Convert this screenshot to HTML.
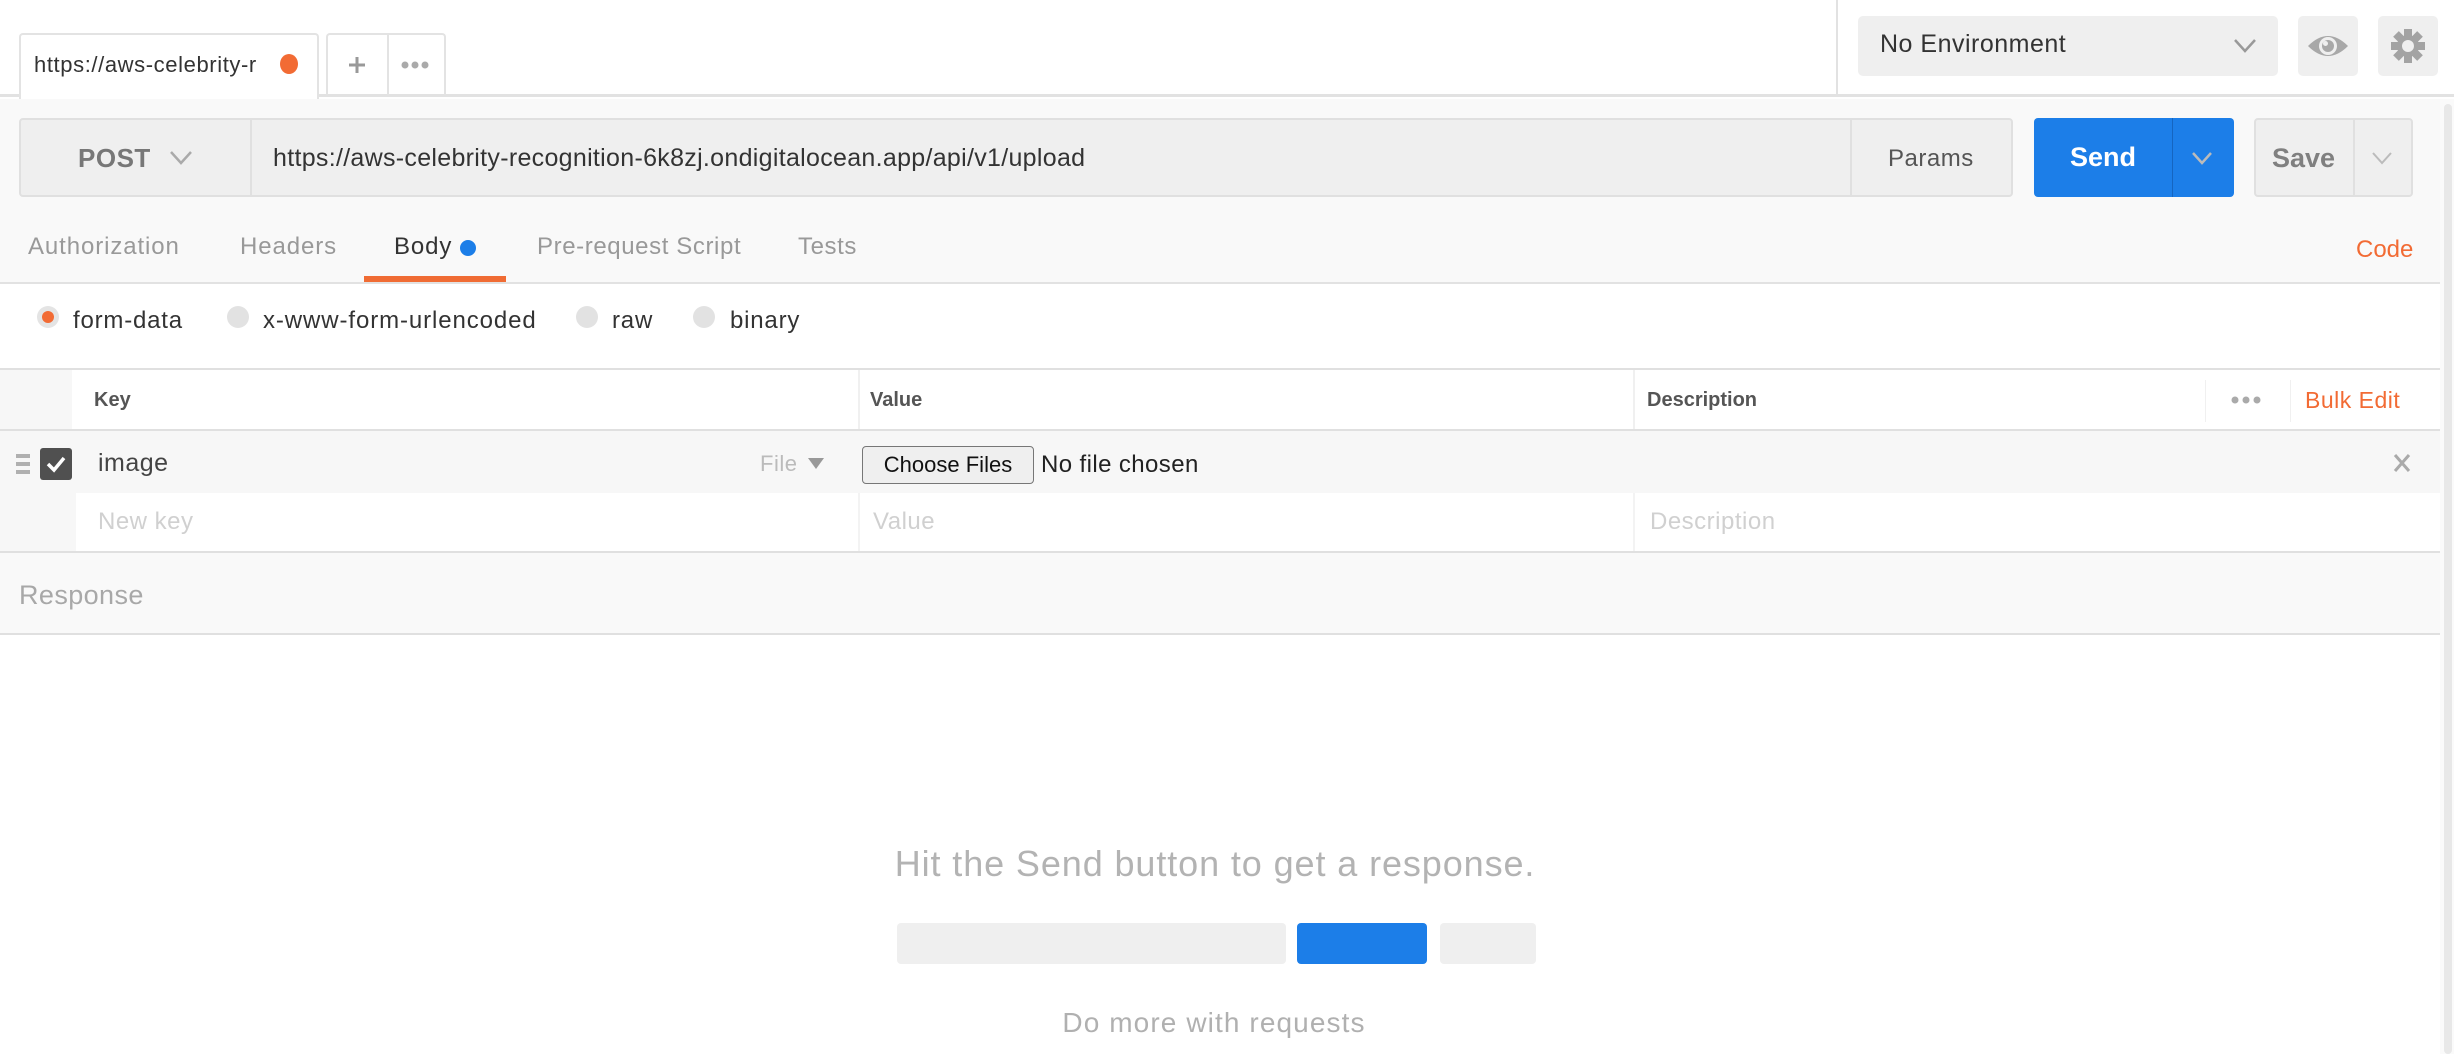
<!DOCTYPE html>
<html><head><meta charset="utf-8"><style>
*{box-sizing:border-box;margin:0;padding:0}
body{width:2454px;height:1054px;overflow:hidden;background:#fff;font-family:"Liberation Sans",sans-serif;position:relative;color:#505050}
.a{position:absolute;white-space:nowrap}
</style></head><body>
<!-- top bar -->
<div class="a" style="left:0;top:0;width:2454px;height:97px;background:#fff;border-bottom:3px solid #e2e2e2"></div>
<div class="a" style="left:19px;top:33px;width:300px;height:66px;background:#fff;border:2px solid #e3e3e3;border-bottom:none;border-radius:4px 4px 0 0"></div>
<div class="a" style="left:34px;top:52px;font-size:22px;color:#333;width:222px;overflow:hidden;letter-spacing:0.6px">https://aws-celebrity-recognition</div>
<div class="a" style="left:280px;top:54px;width:18px;height:20px;border-radius:50%;background:#f26b34"></div>
<div class="a" style="left:326px;top:33px;width:120px;height:62px;border:2px solid #e3e3e3;border-bottom:none;border-radius:4px 4px 0 0"></div>
<div class="a" style="left:387px;top:33px;width:2px;height:62px;background:#e3e3e3"></div>
<svg class="a" style="left:347px;top:55px" width="20" height="20"><path d="M10 2 V18 M2 10 H18" stroke="#999" stroke-width="3"/></svg>
<svg class="a" style="left:400px;top:60px" width="30" height="10"><circle cx="5" cy="5" r="3.5" fill="#aaa"/><circle cx="15" cy="5" r="3.5" fill="#aaa"/><circle cx="25" cy="5" r="3.5" fill="#aaa"/></svg>
<div class="a" style="left:1836px;top:0;width:2px;height:96px;background:#e2e2e2"></div>
<div class="a" style="left:1858px;top:16px;width:420px;height:60px;background:#efefef;border-radius:5px"></div>
<div class="a" style="left:1880px;top:30px;font-size:25px;color:#333;letter-spacing:0.5px">No Environment</div>
<svg class="a" style="left:2232px;top:36px" width="26" height="20"><path d="M3 4 L13 15 L23 4" stroke="#999" stroke-width="2.5" fill="none"/></svg>
<div class="a" style="left:2298px;top:16px;width:60px;height:60px;background:#efefef;border-radius:5px"></div>
<svg class="a" style="left:2306px;top:28px" width="44" height="36"><path d="M2 18 Q22 -2 42 18 Q22 38 2 18Z" fill="#a8a8a8"/><circle cx="22" cy="18" r="9" fill="#efefef"/><circle cx="22" cy="18" r="6" fill="#a8a8a8"/><circle cx="19.5" cy="15.5" r="2.5" fill="#efefef"/></svg>
<div class="a" style="left:2378px;top:16px;width:60px;height:60px;background:#efefef;border-radius:5px"></div>
<svg class="a" style="left:2390px;top:28px" width="36" height="36" viewBox="0 0 36 36"><g fill="#a3a3a3"><circle cx="18" cy="18" r="11"/><rect x="14" y="1" width="8" height="34"/><rect x="1" y="14" width="34" height="8"/><rect x="14" y="1" width="8" height="34" transform="rotate(45 18 18)"/><rect x="14" y="1" width="8" height="34" transform="rotate(-45 18 18)"/></g><circle cx="18" cy="18" r="6" fill="#efefef"/></svg>

<!-- request area -->
<div class="a" style="left:0;top:99px;width:2440px;height:183px;background:#f9f9f9"></div>
<div class="a" style="left:2440px;top:99px;width:14px;height:955px;background:#fafafa"></div>
<div class="a" style="left:2444px;top:104px;width:8px;height:950px;background:#e8e8e8;border-radius:4px"></div>
<div class="a" style="left:19px;top:118px;width:1994px;height:79px;background:#efefef;border:2px solid #e0e0e0;border-radius:4px"></div>
<div class="a" style="left:250px;top:118px;width:2px;height:79px;background:#e0e0e0"></div>
<div class="a" style="left:1850px;top:118px;width:2px;height:79px;background:#e0e0e0"></div>
<div class="a" style="left:78px;top:143px;font-size:26px;font-weight:bold;color:#777;letter-spacing:0.5px">POST</div>
<svg class="a" style="left:168px;top:148px" width="26" height="20"><path d="M3 4 L13 15 L23 4" stroke="#aaa" stroke-width="2.5" fill="none"/></svg>
<div class="a" style="left:273px;top:144px;font-size:25px;color:#333;letter-spacing:0.3px">https://aws-celebrity-recognition-6k8zj.ondigitalocean.app/api/v1/upload</div>
<div class="a" style="left:1888px;top:145px;font-size:24px;color:#555;letter-spacing:0.5px">Params</div>
<div class="a" style="left:2034px;top:118px;width:200px;height:79px;background:#1c7ee8;border-radius:4px"></div>
<div class="a" style="left:2172px;top:118px;width:1px;height:79px;background:#1565c0"></div>
<div class="a" style="left:2070px;top:142px;font-size:27px;font-weight:bold;color:#fff">Send</div>
<svg class="a" style="left:2190px;top:150px" width="24" height="18"><path d="M3 3 L12 13 L21 3" stroke="#bbb" stroke-width="2.5" fill="none"/></svg>
<div class="a" style="left:2254px;top:118px;width:159px;height:79px;background:#efefef;border:2px solid #e0e0e0;border-radius:4px"></div>
<div class="a" style="left:2353px;top:118px;width:2px;height:79px;background:#e0e0e0"></div>
<div class="a" style="left:2272px;top:143px;font-size:27px;font-weight:bold;color:#808080">Save</div>
<svg class="a" style="left:2370px;top:150px" width="24" height="18"><path d="M3 3 L12 13 L21 3" stroke="#bbb" stroke-width="2" fill="none"/></svg>

<!-- tabs -->
<div class="a" style="left:28px;top:233px;font-size:24px;color:#999;letter-spacing:0.9px">Authorization</div>
<div class="a" style="left:240px;top:233px;font-size:24px;color:#999;letter-spacing:0.9px">Headers</div>
<div class="a" style="left:394px;top:233px;font-size:24px;color:#333;letter-spacing:0.9px">Body</div>
<div class="a" style="left:460px;top:240px;width:16px;height:16px;border-radius:50%;background:#1c7ee8"></div>
<div class="a" style="left:537px;top:233px;font-size:24px;color:#999;letter-spacing:0.6px">Pre-request Script</div>
<div class="a" style="left:798px;top:233px;font-size:24px;color:#999;letter-spacing:0.6px">Tests</div>
<div class="a" style="left:2356px;top:236px;font-size:24px;color:#f26b34">Code</div>
<div class="a" style="left:364px;top:276px;width:142px;height:6px;background:#f06c34"></div>
<div class="a" style="left:0;top:282px;width:2440px;height:2px;background:#e2e2e2"></div>

<!-- radios -->
<div class="a" style="left:37px;top:306px;width:22px;height:22px;border-radius:50%;background:#e4e4e4"></div>
<div class="a" style="left:42px;top:311px;width:12px;height:12px;border-radius:50%;background:#f26b34"></div>
<div class="a" style="left:73px;top:307px;font-size:24px;color:#333;letter-spacing:0.8px">form-data</div>
<div class="a" style="left:227px;top:306px;width:22px;height:22px;border-radius:50%;background:#e2e2e2"></div>
<div class="a" style="left:263px;top:307px;font-size:24px;color:#333;letter-spacing:0.9px">x-www-form-urlencoded</div>
<div class="a" style="left:576px;top:306px;width:22px;height:22px;border-radius:50%;background:#e2e2e2"></div>
<div class="a" style="left:612px;top:307px;font-size:24px;color:#333;letter-spacing:0.8px">raw</div>
<div class="a" style="left:693px;top:306px;width:22px;height:22px;border-radius:50%;background:#e2e2e2"></div>
<div class="a" style="left:730px;top:307px;font-size:24px;color:#333;letter-spacing:0.8px">binary</div>

<!-- table -->
<div class="a" style="left:0;top:368px;width:2440px;height:2px;background:#e0e0e0"></div>
<div class="a" style="left:0;top:370px;width:72px;height:60px;background:#f7f7f7"></div>
<div class="a" style="left:858px;top:370px;width:2px;height:60px;background:#f0f0f0"></div>
<div class="a" style="left:1633px;top:370px;width:2px;height:60px;background:#f0f0f0"></div>
<div class="a" style="left:2205px;top:380px;width:1px;height:42px;background:#f0f0f0"></div>
<div class="a" style="left:2290px;top:380px;width:1px;height:42px;background:#f0f0f0"></div>
<div class="a" style="left:94px;top:389px;font-size:20px;font-weight:bold;color:#555">Key</div>
<div class="a" style="left:870px;top:389px;font-size:20px;font-weight:bold;color:#555">Value</div>
<div class="a" style="left:1647px;top:389px;font-size:20px;font-weight:bold;color:#555">Description</div>
<svg class="a" style="left:2230px;top:395px" width="32" height="10"><circle cx="5" cy="5" r="3.5" fill="#aaa"/><circle cx="16" cy="5" r="3.5" fill="#aaa"/><circle cx="27" cy="5" r="3.5" fill="#aaa"/></svg>
<div class="a" style="left:2305px;top:387px;font-size:23px;color:#f26b34;letter-spacing:0.5px">Bulk Edit</div>
<div class="a" style="left:0;top:429px;width:2440px;height:2px;background:#e0e0e0"></div>
<div class="a" style="left:0;top:431px;width:2440px;height:62px;background:#f7f7f7"></div>
<div class="a" style="left:16px;top:454px;width:14px;height:4px;background:#b0b0b0;box-shadow:0 8px 0 #b0b0b0,0 16px 0 #b0b0b0"></div>
<div class="a" style="left:40px;top:448px;width:32px;height:32px;border-radius:3px;background:#505050"></div>
<svg class="a" style="left:40px;top:448px" width="32" height="32"><path d="M8 16 L14 22 L24 10" stroke="#fff" stroke-width="3.5" fill="none"/></svg>
<div class="a" style="left:98px;top:449px;font-size:25px;color:#444;letter-spacing:0.5px">image</div>
<div class="a" style="left:760px;top:451px;font-size:22px;color:#bbb;letter-spacing:0.5px">File</div>
<div class="a" style="left:808px;top:458px;width:0;height:0;border-left:8px solid transparent;border-right:8px solid transparent;border-top:11px solid #999"></div>
<div class="a" style="left:862px;top:446px;width:172px;height:38px;background:#efefef;border:1.5px solid #777;border-radius:4px;font-size:22px;color:#111;text-align:center;line-height:35px">Choose Files</div>
<div class="a" style="left:1041px;top:451px;font-size:24px;color:#222;letter-spacing:0.4px">No file chosen</div>
<svg class="a" style="left:2392px;top:452px" width="20" height="22"><path d="M3 3 L17 19 M17 3 L3 19" stroke="#aaa" stroke-width="3"/></svg>
<div class="a" style="left:0;top:493px;width:76px;height:58px;background:#f7f7f7"></div>
<div class="a" style="left:858px;top:493px;width:2px;height:58px;background:#f3f3f3"></div>
<div class="a" style="left:1633px;top:493px;width:2px;height:58px;background:#f3f3f3"></div>
<div class="a" style="left:98px;top:508px;font-size:24px;color:#d0d0d0;letter-spacing:0.5px">New key</div>
<div class="a" style="left:873px;top:508px;font-size:24px;color:#d0d0d0;letter-spacing:0.5px">Value</div>
<div class="a" style="left:1650px;top:508px;font-size:24px;color:#d0d0d0;letter-spacing:0.5px">Description</div>

<!-- response -->
<div class="a" style="left:0;top:551px;width:2440px;height:84px;background:#f9f9f9;border-top:2px solid #e0e0e0;border-bottom:2px solid #e0e0e0"></div>
<div class="a" style="left:19px;top:580px;font-size:27px;color:#a8a8a8;letter-spacing:0.4px">Response</div>
<div class="a" style="left:0;top:843px;width:2440px;text-align:center;font-size:36px;color:#b3b3b3;letter-spacing:0.9px"><span style="position:relative;left:-5px">Hit the Send button to get a response.</span></div>
<div class="a" style="left:897px;top:923px;width:389px;height:41px;background:#efefef;border-radius:4px"></div>
<div class="a" style="left:1297px;top:923px;width:130px;height:41px;background:#1c7ee8;border-radius:4px"></div>
<div class="a" style="left:1440px;top:923px;width:96px;height:41px;background:#efefef;border-radius:4px"></div>
<div class="a" style="left:0;top:1007px;width:2440px;text-align:center;font-size:28px;color:#b0b0b0;letter-spacing:1.1px"><span style="position:relative;left:-6px">Do more with requests</span></div>
</body></html>
